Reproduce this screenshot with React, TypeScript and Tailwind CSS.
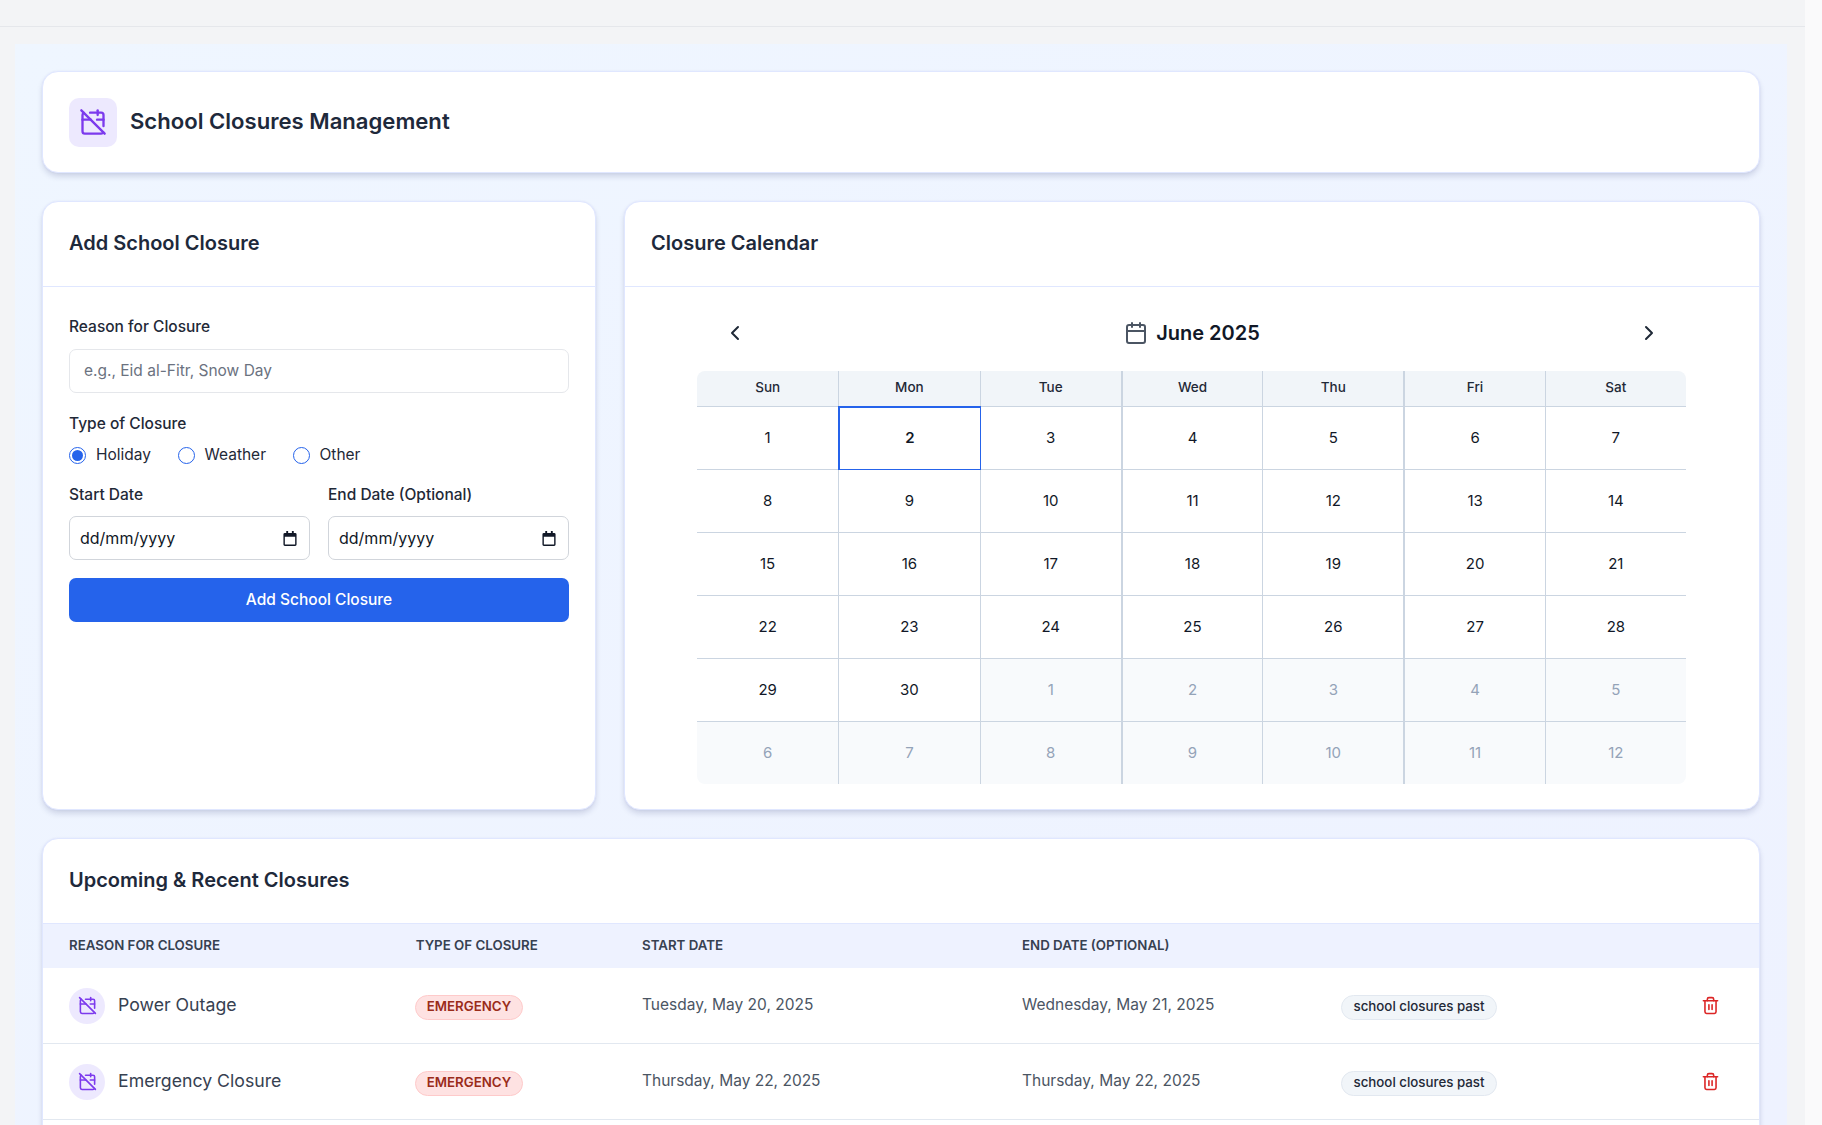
import { CalendarOff, Calendar, ChevronLeft, ChevronRight, Trash2 } from "lucide-react";

const weekdays = ["Sun", "Mon", "Tue", "Wed", "Thu", "Fri", "Sat"];

const days = [
  ...Array.from({ length: 30 }, (_, i) => ({ day: i + 1, muted: false })),
  ...Array.from({ length: 12 }, (_, i) => ({ day: i + 1, muted: true })),
];

const closures = [
  { reason: "Power Outage", start: "Tuesday, May 20, 2025", end: "Wednesday, May 21, 2025" },
  { reason: "Emergency Closure", start: "Thursday, May 22, 2025", end: "Thursday, May 22, 2025" },
];

const cardClass =
  "bg-white rounded-[16px] border border-[#e0e7ff] shadow-[0_4px_6px_-1px_rgba(30,41,99,0.18),0_0_2px_rgba(79,70,229,0.08)]";

const Radio = ({ label, checked }: { label: string; checked?: boolean }) => (
  <label className="flex items-center gap-[10px]">
    <span className="w-[17px] h-[17px] rounded-full border border-[#2563eb] flex items-center justify-center bg-white">
      {checked && <span className="w-[11px] h-[11px] rounded-full bg-[#2563eb]" />}
    </span>
    <span className="text-[15.5px] text-[#1f2937]">{label}</span>
  </label>
);

const DateField = ({ label }: { label: string }) => (
  <div className="flex-1">
    <p className="text-[15.5px] leading-[20px] font-medium text-[#1f2937] mb-[11px]">{label}</p>
    <div className="h-[44px] rounded-[7px] border border-[#d1d5db] bg-white flex items-center justify-between pl-[10px] pr-[12px]">
      <span className="text-[16px] text-[#111827]">dd/mm/yyyy</span>
      <svg viewBox="0 0 14 16" className="w-[14px] h-[15px] text-[#111827]" fill="currentColor">
        <path d="M3 0h2v2h4V0h2v2h1.500A1.500 1.500 0 0 1 14 3.500v11a1.500 1.500 0 0 1-1.500 1.500h-11A1.500 1.500 0 0 1 0 14.500v-11A1.500 1.500 0 0 1 1.500 2H3V0Zm-1.500 6v8.500h11V6h-11Z" />
      </svg>
    </div>
  </div>
);

const Card = ({ title, children }: { title: string; children: React.ReactNode }) => (
  <section className={`${cardClass} overflow-hidden`}>
    <h2 className="h-[85px] pb-[2px] px-[26px] flex items-center border-b border-[#e0e7ff] text-[20px] font-semibold text-[#1e293b]">
      {title}
    </h2>
    {children}
  </section>
);

export default function App() {
  return (
    <div className="flex h-[1125px] overflow-hidden bg-[#f3f4f6] font-['Inter',sans-serif]">
      <div className="w-[1805px] shrink-0 flex flex-col">
        {/* Top nav, scrolled almost out of view */}
        <header className="h-[27px] shrink-0 border-b border-[#e5e7eb] overflow-hidden">
          <div className="flex -mt-[19px] h-[20px] items-end text-[15px] leading-[20px] text-[#9ca3af]">
            <span className="w-[1331px] shrink-0 pl-[395px]">School Closures</span>
            <span>Payroll</span>
          </div>
        </header>

        <main className="flex-1 pt-[17px] pl-[15px] pr-[18px] min-h-0">
          <div className="h-full bg-gradient-to-br from-[#eff6ff] to-[#eef2ff] pt-[27px] px-[27px] flex flex-col gap-[28px]">
            {/* Page title */}
            <div className={`${cardClass} h-[102px] shrink-0 flex items-center gap-[13px] px-[26px]`}>
              <div className="w-[48px] h-[49px] rounded-[10px] bg-[#ede9fe] flex items-center justify-center">
                <CalendarOff className="w-[28px] h-[28px] text-[#7c3aed]" />
              </div>
              <h1 className="text-[22.1px] font-semibold text-[#1e293b]">School Closures Management</h1>
            </div>

            <div className="flex gap-[28px] shrink-0">
              {/* Form */}
              <div className="w-[554px] shrink-0">
                <Card title="Add School Closure">
                  <div className="h-[522px] px-[26px] pt-[30px]">
                    <p className="text-[15.5px] leading-[20px] font-medium text-[#1f2937] mb-[12px]">Reason for Closure</p>
                    <input
                      placeholder="e.g., Eid al-Fitr, Snow Day"
                      className="w-full h-[44px] pb-px rounded-[7px] border border-[#e5e7eb] px-[14px] text-[15.5px] placeholder:text-[#6b7280] outline-none"
                    />
                    <p className="mt-[21px] text-[15.5px] leading-[20px] font-medium text-[#1f2937]">Type of Closure</p>
                    <div className="mt-[11px] h-[20px] flex items-center gap-[26.5px]">
                      <Radio label="Holiday" checked />
                      <Radio label="Weather" />
                      <Radio label="Other" />
                    </div>
                    <div className="mt-[20px] flex gap-[18px]">
                      <DateField label="Start Date" />
                      <DateField label="End Date (Optional)" />
                    </div>
                    <button className="mt-[18px] w-full h-[44px] rounded-[7px] bg-[#2563eb] text-white text-[15.5px] font-medium">
                      Add School Closure
                    </button>
                  </div>
                </Card>
              </div>

              {/* Calendar */}
              <div className="flex-1">
                <Card title="Closure Calendar">
                  <div className="h-[522px] pt-[31px]">
                    <div className="w-[989px] ml-[72px]">
                      <div className="h-[30px] mb-[23px] pl-[26px] pr-[25px] flex items-center justify-between">
                        <ChevronLeft className="w-[24px] h-[24px] text-[#1f2937]" />
                        <div className="flex items-center gap-[8px]">
                          <Calendar className="w-[24px] h-[24px] text-[#4b5563]" />
                          <span className="text-[20px] font-semibold text-[#111827]">June 2025</span>
                        </div>
                        <ChevronRight className="w-[24px] h-[24px] text-[#1f2937]" />
                      </div>

                      <div className="grid grid-cols-7 rounded-[8px] overflow-hidden">
                        {weekdays.map((d, i) => (
                          <div
                            key={d}
                            className={`h-[36px] pb-[2px] bg-[#f1f5f9] border-b border-[#cbd5e1] flex items-center justify-center text-[13.5px] font-medium text-[#1f2937] ${i > 0 ? "border-l" : ""} ${i === 3 || i === 5 ? "border-l-2" : ""}`}
                          >
                            {d}
                          </div>
                        ))}
                        {days.map((d, i) => {
                          const col = i % 7;
                          const selected = i === 1;
                          const edges = selected
                            ? "relative z-10 h-[64px] -mt-px -mr-px border-t-2 border-l-2 border-r border-b border-[#2563eb] font-semibold"
                            : `border-[#cbd5e1] ${col > 0 ? "border-l" : ""} ${col === 3 || col === 5 ? "border-l-2" : ""} ${i < 35 ? "h-[63px] border-b" : "h-[62px]"}`;
                          return (
                            <div
                              key={i}
                              className={`flex items-center justify-center text-[15px] ${edges} ${d.muted ? "bg-[#f8fafc] text-[#94a3b8]" : "text-[#111827]"}`}
                            >
                              {d.day}
                            </div>
                          );
                        })}
                      </div>
                    </div>
                  </div>
                </Card>
              </div>
            </div>

            {/* List */}
            <div className="shrink-0">
              <Card title="Upcoming & Recent Closures">
                <div className="h-[44px] bg-[#eef2ff] grid grid-cols-[346.7px_226.3px_380px_319px_1fr] items-center px-[26px] text-[13.3px] font-semibold uppercase text-[#374151]">
                  <span>Reason for Closure</span>
                  <span>Type of Closure</span>
                  <span>Start Date</span>
                  <span>End Date (Optional)</span>
                </div>
                {closures.map((c) => (
                  <div
                    key={c.reason}
                    className="h-[76px] border-b border-[#e2e8f0] grid grid-cols-[346.7px_226.3px_380px_319px_360px_1fr] items-center px-[26px]"
                  >
                    <div className="flex items-center gap-[13px]">
                      <div className="w-[36px] h-[36px] rounded-full bg-[#ede9fe] flex items-center justify-center">
                        <CalendarOff className="w-[19px] h-[19px] text-[#7c3aed]" />
                      </div>
                      <span className="text-[17.7px] text-[#374151]">{c.reason}</span>
                    </div>
                    <div className="pt-[2px] -ml-px">
                      <span className="inline-flex h-[25px] items-center px-[11px] rounded-full bg-[#fee2e2] border border-[#fecaca] text-[13.3px] font-semibold text-[#9a2c1a]">
                        EMERGENCY
                      </span>
                    </div>
                    <span className="pb-[2px] text-[15.5px] text-[#4b5563]">{c.start}</span>
                    <span className="pb-[2px] text-[15.5px] text-[#4b5563]">{c.end}</span>
                    <div className="pt-[2px]">
                      <span className="inline-flex h-[25px] items-center px-[11.5px] rounded-full bg-[#f1f5f9] border border-[#e2e8f0] text-[13.3px] font-medium text-[#1f2937]">
                        school closures past
                      </span>
                    </div>
                    <Trash2 className="w-[19px] h-[19px] text-[#dc2626]" />
                  </div>
                ))}
                <div className="h-[80px]" />
              </Card>
            </div>
          </div>
        </main>
      </div>
      {/* Scrollbar gutter */}
      <div className="flex-1 bg-[#fafafb]" />
    </div>
  );
}
